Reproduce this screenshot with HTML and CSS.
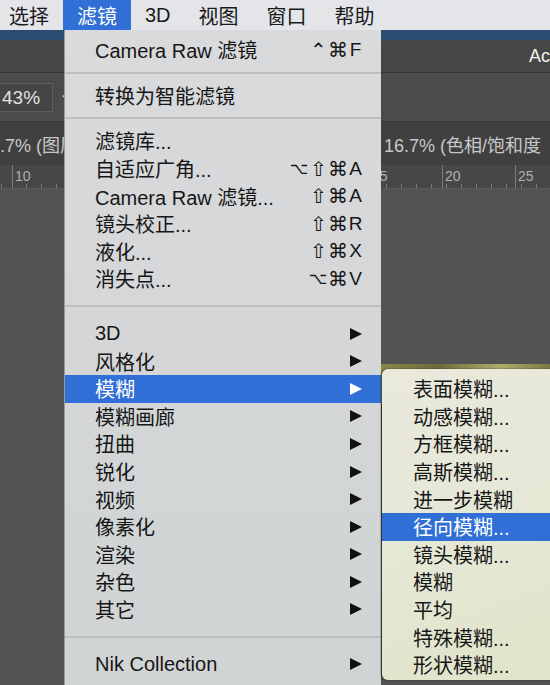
FILE: index.html
```html
<!DOCTYPE html>
<html lang="zh-CN">
<head>
  <meta charset="UTF-8">
  <meta name="viewport" content="width=device-width, initial-scale=1.0">
  <title>滤镜菜单</title>
  <link rel="stylesheet" href="styles.css">
</head>
<body>
  <!-- top menu bar -->
  <div class="menubar">
    <span class="menubar-item">选择</span>
    <span class="menubar-item active">滤镜</span>
    <span class="menubar-item">3D</span>
    <span class="menubar-item">视图</span>
    <span class="menubar-item">窗口</span>
    <span class="menubar-item">帮助</span>
  </div>

  <!-- photoshop workspace behind the menus -->
  <div class="workspace">
    <div class="titlebar"></div>
    <div class="toolbar">
      <span class="app-name">Ac</span>
    </div>
    <div class="options">
      <div class="zoom-field">43%</div>
      <span class="zoom-arrow">⌄</span>
    </div>
    <div class="tabs">
      <span class="tab">.7% (图层</span>
      <span class="tab tab-right">16.7% (色相/饱和度</span>
    </div>
    <div class="ruler">
      <span class="ruler-seg ruler-start"></span>
      <span class="ruler-seg ruler-wide">10</span>
      <span class="ruler-seg">15</span>
      <span class="ruler-seg">20</span>
      <span class="ruler-seg">25</span>
    </div>
    <div class="canvas">
      <div class="photo"></div>
    </div>
  </div>

  <!-- 滤镜 dropdown -->
  <div class="menu">
    <div class="item">
      <span>Camera Raw 滤镜</span>
      <span class="keys"><span class="key">⌃</span><span class="key">⌘</span><span class="key-letter">F</span></span>
    </div>
    <div class="sep"></div>
    <div class="item"><span>转换为智能滤镜</span></div>
    <div class="sep"></div>
    <div class="item"><span>滤镜库...</span></div>
    <div class="item">
      <span>自适应广角...</span>
      <span class="keys"><span class="key key-opt">⌥</span><span class="key">⇧</span><span class="key">⌘</span><span class="key-letter">A</span></span>
    </div>
    <div class="item">
      <span>Camera Raw 滤镜...</span>
      <span class="keys"><span class="key">⇧</span><span class="key">⌘</span><span class="key-letter">A</span></span>
    </div>
    <div class="item">
      <span>镜头校正...</span>
      <span class="keys"><span class="key">⇧</span><span class="key">⌘</span><span class="key-letter">R</span></span>
    </div>
    <div class="item">
      <span>液化...</span>
      <span class="keys"><span class="key">⇧</span><span class="key">⌘</span><span class="key-letter">X</span></span>
    </div>
    <div class="item">
      <span>消失点...</span>
      <span class="keys"><span class="key key-opt">⌥</span><span class="key">⌘</span><span class="key-letter">V</span></span>
    </div>
    <div class="sep sep-tall"></div>
    <div class="item"><span>3D</span><span class="arrow"></span></div>
    <div class="item"><span>风格化</span><span class="arrow"></span></div>
    <div class="item selected"><span>模糊</span><span class="arrow"></span></div>
    <div class="item"><span>模糊画廊</span><span class="arrow"></span></div>
    <div class="item"><span>扭曲</span><span class="arrow"></span></div>
    <div class="item"><span>锐化</span><span class="arrow"></span></div>
    <div class="item"><span>视频</span><span class="arrow"></span></div>
    <div class="item"><span>像素化</span><span class="arrow"></span></div>
    <div class="item"><span>渲染</span><span class="arrow"></span></div>
    <div class="item"><span>杂色</span><span class="arrow"></span></div>
    <div class="item"><span>其它</span><span class="arrow"></span></div>
    <div class="sep sep-tall"></div>
    <div class="item"><span>Nik Collection</span><span class="arrow"></span></div>
  </div>

  <!-- 模糊 submenu -->
  <div class="submenu">
    <div class="item"><span>表面模糊...</span></div>
    <div class="item"><span>动感模糊...</span></div>
    <div class="item"><span>方框模糊...</span></div>
    <div class="item"><span>高斯模糊...</span></div>
    <div class="item"><span>进一步模糊</span></div>
    <div class="item selected"><span>径向模糊...</span></div>
    <div class="item"><span>镜头模糊...</span></div>
    <div class="item"><span>模糊</span></div>
    <div class="item"><span>平均</span></div>
    <div class="item"><span>特殊模糊...</span></div>
    <div class="item"><span>形状模糊...</span></div>
  </div>
</body>
</html>
```

FILE: styles.css
```css
html, body {
  margin: 0;
  padding: 0;
}
body {
  width: 550px;
  height: 685px;
  overflow: hidden;
  position: relative;
  font-family: "Liberation Sans", "Noto Sans CJK SC", sans-serif;
  background-color: #535353;
}

/* menu bar */
.menubar {
  height: 30px;
  display: flex;
  align-items: stretch;
  background-color: #e3e5e9;
  color: #1a1a1a;
  font-size: 20px;
}
.menubar-item {
  display: flex;
  align-items: center;
  padding: 0 14px;
}
.menubar-item:first-child {
  padding-left: 9px;
}
.menubar-item.active {
  background-color: #2f6fd6;
  color: #FFFFFF;
}

/* workspace */
.workspace {
  color: #c8c8c8;
}
.titlebar {
  height: 10px;
  background-color: #2c4b74;
}
.toolbar {
  height: 32px;
  background-color: #464646;
  border-bottom: 1px solid #363636;
  display: flex;
  align-items: center;
  padding-left: 529px;
  white-space: nowrap;
}
.app-name {
  color: #f2f2f2;
  font-size: 18px;
}
.options {
  height: 48px;
  background-color: #4b4b4b;
  border-bottom: 1px solid #3a3a3a;
  display: flex;
  align-items: center;
}
.zoom-field {
  width: 50px;
  height: 27px;
  line-height: 27px;
  padding-left: 2px;
  background-color: #454545;
  border: 1px solid #5e5e5e;
  border-left: none;
  color: #e2e2e2;
  font-size: 19px;
}
.zoom-arrow {
  margin-left: 6px;
  font-size: 16px;
  color: #cfcfcf;
  position: relative;
  top: -4px;
}
.tabs {
  height: 43px;
  background-color: #404040;
  display: flex;
  align-items: center;
  font-size: 18px;
  white-space: nowrap;
  overflow: hidden;
}
.tab-right {
  margin-left: 306px;
}
.ruler {
  height: 23px;
  background-color: #474747;
  border-bottom: 1px solid #5a5a5a;
  display: flex;
  font-size: 14px;
  color: #b0b0b0;
  white-space: nowrap;
  overflow: hidden;
  background-image: repeating-linear-gradient(to right, transparent 0, transparent 14px, #7c7c7c 14px, #7c7c7c 15px);
  background-size: 100% 4px;
  background-position: 12px bottom;
  background-repeat: repeat-x;
}
.ruler-seg {
  flex: none;
  width: 70px;
  padding-left: 2px;
  border-left: 1px solid #7c7c7c;
  line-height: 22px;
}
.ruler-start {
  width: 12px;
  padding: 0;
  border: none;
}
.ruler-wide {
  width: 354px;
}
.canvas {
  height: 500px;
  padding-top: 175px;
  box-sizing: border-box;
}
.photo {
  margin-left: 300px;
  height: 40px;
  background: linear-gradient(90deg, #5e5c33 0%, #8f8b4d 30%, #6d6b3c 55%, #b0ac6a 80%, #7d7a45 100%);
}

/* dropdown menus */
.menu {
  position: absolute;
  top: 30px;
  left: 64px;
  width: 317px;
  height: 660px;
  padding-top: 6px;
  box-sizing: border-box;
  border-left: 1px solid #9a9a9a;
  background: linear-gradient(180deg, #d9dadc 0%, #d4d6d8 50%, #d0d4d4 100%);
  color: #161616;
  font-size: 20px;
}
.item {
  height: 27.6px;
  display: flex;
  align-items: center;
  justify-content: space-between;
  padding: 0 17px 0 30px;
  white-space: nowrap;
}
.item.selected {
  background-color: #2f6fd6;
  color: #FFFFFF;
}
.sep {
  height: 18px;
  display: flex;
  align-items: center;
}
.sep::before {
  content: "";
  flex: 1;
  height: 2px;
  background-color: #bdbec0;
}
.sep-tall {
  height: 27px;
}
.keys {
  display: flex;
  align-items: center;
  font-size: 19px;
}
.key {
  width: 19px;
  text-align: center;
  font-family: "DejaVu Sans", sans-serif;
  font-size: 20px;
}
.key-opt {
  width: 20px;
  font-size: 16px;
}
.key-letter {
  width: 17px;
  text-align: center;
}
.arrow {
  width: 0;
  height: 0;
  margin-right: 2px;
  border-left: 12px solid #111;
  border-top: 6.5px solid transparent;
  border-bottom: 6.5px solid transparent;
}
.item.selected .arrow {
  border-left-color: #FFFFFF;
}

.submenu {
  position: absolute;
  top: 369px;
  left: 382px;
  width: 180px;
  height: 311px;
  padding-top: 6px;
  box-sizing: border-box;
  border-radius: 6px;
  background: linear-gradient(160deg, #e9e9dc 0%, #e6e8d6 50%, #e0e4c8 100%);
  box-shadow: -1px 0 2px rgba(0, 0, 0, 0.55);
  color: #161616;
  font-size: 20px;
}
.submenu .item {
  padding-left: 31px;
}
```
